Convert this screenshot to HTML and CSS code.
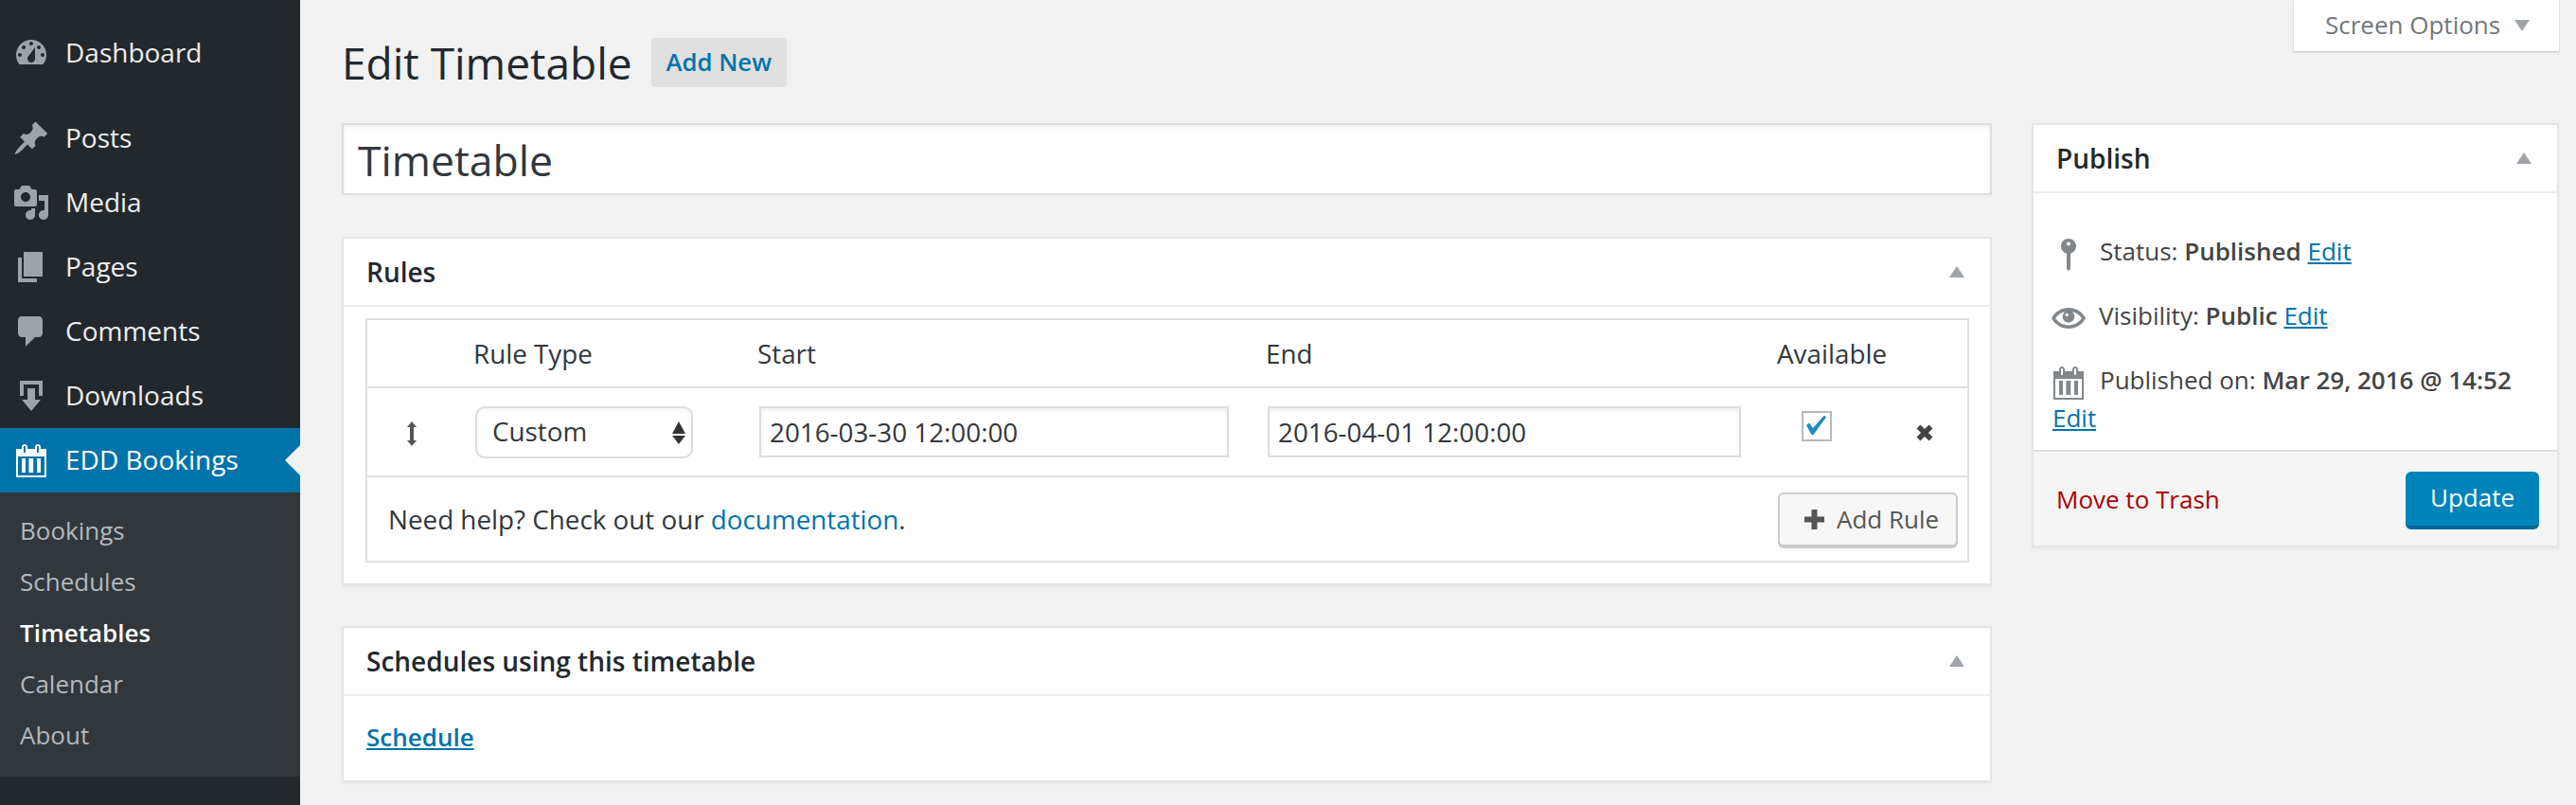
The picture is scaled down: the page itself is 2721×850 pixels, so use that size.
FILE: index.html
```html
<!DOCTYPE html>
<html lang="en">
<head>
  <meta charset="UTF-8">
  <title>Edit Timetable</title>
  <link rel="stylesheet" href="styles.css">
</head>
<body>
  <aside class="sidebar">
    <ul class="menu">
      <li class="menu-item first">
        <svg class="menu-icon" viewBox="0 0 20 20"><path fill-rule="evenodd" d="M3.76 16h12.48c1.1-1.37 1.76-3.11 1.76-5 0-4.42-3.58-8-8-8s-8 3.58-8 8c0 1.89.66 3.63 1.76 5zM10 4c.55 0 1 .45 1 1s-.45 1-1 1-1-.45-1-1 .45-1 1-1zM6 6c.55 0 1 .45 1 1s-.45 1-1 1-1-.45-1-1 .45-1 1-1zm8 0c.55 0 1 .45 1 1s-.45 1-1 1-1-.45-1-1 .45-1 1-1zm-5.37 5.55L12 7v6c0 1.1-.9 2-2 2s-2-.9-2-2c0-.57.24-1.08.63-1.45zM4 10c.55 0 1 .45 1 1s-.45 1-1 1-1-.45-1-1 .45-1 1-1zm12 0c.55 0 1 .45 1 1s-.45 1-1 1-1-.45-1-1 .45-1 1-1z"/><circle cx="10" cy="13" r="1" fill="#23282d"/></svg>
        Dashboard
      </li>
      <li class="menu-item">
        <svg class="menu-icon" viewBox="0 0 20 20"><path d="M10.44 3.02l1.82-1.82 6.36 6.35-1.83 1.82c-1.05-.68-2.48-.57-3.41.36l-.75.75c-.92.93-1.04 2.35-.35 3.41l-1.83 1.82-2.41-2.41-2.8 2.79c-.42.42-3.38 2.71-3.8 2.29s1.86-3.39 2.28-3.81l2.79-2.79L4.1 9.36l1.83-1.82c1.05.69 2.48.57 3.4-.36l.75-.75c.93-.92 1.05-2.35.36-3.41z"/></svg>
        Posts
      </li>
      <li class="menu-item">
        <svg class="menu-icon" viewBox="0 0 20 20"><path fill-rule="evenodd" d="M13 11V4c0-.55-.45-1-1-1h-1.67L9 1H5L3.67 3H2c-.55 0-1 .45-1 1v7c0 .55.45 1 1 1h10c.55 0 1-.45 1-1zM7 4.500c1.380 0 2.500 1.120 2.500 2.500S8.380 9.500 7 9.500 4.500 8.380 4.500 7 5.620 4.500 7 4.500zM14 6h5v10.500c0 1.380-1.120 2.500-2.500 2.500S14 17.880 14 16.500s1.120-2.500 2.500-2.500c.17 0 .34.02.5.05V9h-3V6zm-4 8.050V13h2v3.500c0 1.380-1.120 2.500-2.500 2.500S7 17.880 7 16.500 8.120 14 9.500 14c.17 0 .34.02.5.05z"/></svg>
        Media
      </li>
      <li class="menu-item">
        <svg class="menu-icon" viewBox="0 0 20 20"><path d="M6 15V2h10v13H6zm-1 1h8v2H3V5h2v11z"/></svg>
        Pages
      </li>
      <li class="menu-item">
        <svg class="menu-icon" viewBox="0 0 20 20"><path d="M5 2h9c1.100 0 2 .9 2 2v7c0 1.100-.9 2-2 2h-2l-5 5v-5H5c-1.100 0-2-.9-2-2V4c0-1.100.9-2 2-2z"/></svg>
        Comments
      </li>
      <li class="menu-item">
        <svg class="menu-icon" viewBox="0 0 20 20"><path d="M14.010 4v6h2V2H4v8h2.010V4h8zm-2 2v6h3l-5 6-5-6h3V6h4z"/></svg>
        Downloads
      </li>
      <li class="menu-item active">
        <svg class="menu-icon" viewBox="0 0 20 20"><path fill-rule="evenodd" d="M15 4h3v15H2V4h3V3c0-.8.7-1.500 1.500-1.500S8 2.200 8 3v1h4V3c0-.8.7-1.500 1.500-1.500S15 2.200 15 3v1zM6 3v2.500c0 .3.2.5.5.5s.5-.2.5-.5V3c0-.3-.2-.5-.5-.5S6 2.700 6 3zm7 0v2.500c0 .3.2.5.5.5s.5-.2.5-.5V3c0-.3-.2-.5-.5-.5s-.5.2-.5.5zM3 8v10h14V8H3zm2 1h2v7.500H5V9zm3.700 0h2.400v7.500H8.700V9zM13 9h2v7.500h-2V9z"/></svg>
        EDD Bookings
        <span class="menu-arrow"></span>
      </li>
    </ul>
    <ul class="submenu">
      <li>Bookings</li>
      <li>Schedules</li>
      <li class="current">Timetables</li>
      <li>Calendar</li>
      <li>About</li>
    </ul>
  </aside>

  <main class="content">
    <div class="top-bar">
      <div class="heading">
        <h1>Edit Timetable</h1>
        <a class="add-new">Add New</a>
      </div>
      <div class="screen-options">
        Screen Options
        <svg class="toggle" viewBox="0 0 16 12"><path d="M0 0h16L8 12z"/></svg>
      </div>
    </div>

    <div class="columns">
      <div class="col-main">
        <input class="title-input" type="text" value="Timetable">

        <section class="box">
          <h2>
            Rules
            <svg class="toggle" viewBox="0 0 16 12"><path d="M8 0l8 12H0z"/></svg>
          </h2>
          <div class="rules-wrap">
            <table class="rules">
              <colgroup>
                <col class="c-handle"><col class="c-type"><col class="c-start"><col class="c-end"><col class="c-avail"><col class="c-del">
              </colgroup>
              <thead>
                <tr>
                  <th></th>
                  <th>Rule Type</th>
                  <th>Start</th>
                  <th>End</th>
                  <th class="th-avail">Available</th>
                  <th></th>
                </tr>
              </thead>
              <tbody>
                <tr class="rule-row">
                  <td class="handle">
                    <svg width="12" height="26" viewBox="0 0 12 26"><path d="M6 0l5 6H8v14h3l-5 6-5-6h3V6H1z"/></svg>
                  </td>
                  <td>
                    <span class="select-wrap">
                      <select class="rule-type"><option>Custom</option></select>
                      <svg class="select-arrows" width="14" height="24" viewBox="0 0 14 24"><path d="M7 0l7 13H0zM0 15h14l-7 9z"/></svg>
                    </span>
                  </td>
                  <td><input class="date-input start" type="text" value="2016-03-30 12:00:00"></td>
                  <td><input class="date-input end" type="text" value="2016-04-01 12:00:00"></td>
                  <td>
                    <span class="check">
                      <svg width="28" height="28" viewBox="0 0 28 28"><path d="M3 13l3-2.500 4 5.500L22 2.500l2 2L10.500 23H8.500z"/></svg>
                    </span>
                  </td>
                  <td class="remove">
                    <svg width="18" height="18" viewBox="0 0 18 18"><path d="M2.500 2.500l13 13m0-13l-13 13"/></svg>
                  </td>
                </tr>
                <tr class="foot-row">
                  <td colspan="6">
                    <div class="foot">
                      <span>Need help? Check out our <a class="doc-link">documentation</a>.</span>
                      <button class="add-rule">
                        <svg width="21" height="21" viewBox="0 0 21 21"><path d="M7.500 0h6v7.500H21v6h-7.500V21h-6v-7.500H0v-6h7.500z"/></svg>
                        Add Rule
                      </button>
                    </div>
                  </td>
                </tr>
              </tbody>
            </table>
          </div>
        </section>

        <section class="box">
          <h2>
            Schedules using this timetable
            <svg class="toggle" viewBox="0 0 16 12"><path d="M8 0l8 12H0z"/></svg>
          </h2>
          <div class="schedule-list">
            <a class="schedule-link">Schedule</a>
          </div>
        </section>
      </div>

      <div class="col-side">
        <section class="box publish">
          <h2>
            Publish
            <svg class="toggle" viewBox="0 0 16 12"><path d="M8 0l8 12H0z"/></svg>
          </h2>
          <div class="pub-rows">
            <div class="pub-row">
              <svg class="pub-icon" viewBox="0 0 20 20"><path fill-rule="evenodd" d="M14 6c0-2.210-1.790-4-4-4S6 3.790 6 6c0 1.860 1.280 3.410 3 3.860V18l1 1 1-1V9.860c1.720-.45 3-2 3-3.860zM10 3.800c.6 0 1 .4 1 1s-.4 1-1 1-1-.4-1-1 .4-1 1-1z"/></svg>Status: <b>Published</b> <a class="edit-link">Edit</a>
            </div>
            <div class="pub-row">
              <svg class="pub-icon eye" viewBox="0 0 20 20"><path d="M19.700 9.400C17.700 6 14 3.900 10 3.900S2.300 6 .3 9.400L0 10l.3.6c2 3.400 5.700 5.500 9.700 5.500s7.700-2.100 9.700-5.500l.3-.6-.3-.6zM10 14.100c-3.100 0-6-1.600-7.700-4.100C3.600 8 5.700 6.600 8 6.100c-.9.600-1.500 1.700-1.500 2.900 0 1.900 1.600 3.500 3.500 3.500s3.500-1.600 3.500-3.500c0-1.200-.6-2.300-1.500-2.900 2.300.5 4.400 1.900 5.700 3.900-1.700 2.500-4.600 4.100-7.700 4.100z"/><circle cx="9" cy="8" r=".9" fill="#fff"/></svg>Visibility: <b>Public</b> <a class="edit-link">Edit</a>
            </div>
            <div class="pub-row">
              <svg class="pub-icon" viewBox="0 0 20 20"><path fill-rule="evenodd" d="M15 4h3v15H2V4h3V3c0-.8.7-1.500 1.500-1.500S8 2.200 8 3v1h4V3c0-.8.7-1.500 1.500-1.500S15 2.200 15 3v1zM6 3v2.500c0 .3.2.5.5.5s.5-.2.5-.5V3c0-.3-.2-.5-.5-.5S6 2.700 6 3zm7 0v2.500c0 .3.2.5.5.5s.5-.2.5-.5V3c0-.3-.2-.5-.5-.5s-.5.2-.5.5zM3 8v10h14V8H3zm2 1h2v7.500H5V9zm3.700 0h2.400v7.500H8.700V9zM13 9h2v7.500h-2V9z"/></svg>Published on: <b>Mar 29, 2016 @ 14:52</b> <a class="edit-link">Edit</a>
            </div>
          </div>
          <div class="pub-actions">
            <a class="trash">Move to Trash</a>
            <button class="update">Update</button>
          </div>
        </section>
      </div>
    </div>
  </main>
</body>
</html>
```

FILE: styles.css
```css
* {
  box-sizing: border-box;
}
html, body {
  margin: 0;
  height: 100%;
}
body {
  display: flex;
  min-height: 850px;
  overflow: hidden;
  background: #f1f1f1;
  color: #32373c;
  font-family: "Open Sans", sans-serif;
  font-size: 26px;
  line-height: 40px;
}
ul {
  margin: 0;
  padding: 0;
  list-style: none;
}

/* sidebar */
.sidebar {
  flex: 0 0 317px;
  background: #23282d;
}
.menu {
  padding-top: 21px;
}
.menu-item {
  position: relative;
  display: flex;
  align-items: center;
  height: 68px;
  padding: 0 0 2px 13px;
  color: #eee;
  font-size: 28px;
}
.menu-item.first {
  margin-bottom: 23px;
  padding-bottom: 0;
}
.menu-item.active {
  background: #0073aa;
  color: #fff;
}
.menu-icon {
  flex: none;
  width: 40px;
  height: 40px;
  margin: 2px 16px 0 0;
  fill: #9ea3a8;
}
.active .menu-icon {
  fill: #fff;
}
.menu-arrow {
  position: absolute;
  top: 18px;
  right: 0;
  border: 16px solid transparent;
  border-left-width: 0;
  border-right-color: #f1f1f1;
}
.submenu {
  padding: 13px 0 17px;
  background: #32373c;
  color: #b4b9be;
}
.submenu li {
  height: 54px;
  padding-left: 21px;
  line-height: 54px;
}
.submenu .current {
  color: #fff;
  font-weight: 600;
}

/* main area */
.content {
  flex: 1;
  min-width: 0;
  padding: 0 18px 0 44px;
}
.top-bar {
  display: flex;
  justify-content: space-between;
  align-items: flex-start;
  height: 130px;
}
.heading {
  display: flex;
  align-items: center;
  height: 52px;
  margin-top: 40px;
}
h1 {
  margin: 0 20px 0 0;
  color: #23282d;
  font-size: 46px;
  font-weight: 400;
  line-height: 52px;
}
.add-new {
  height: 52px;
  padding: 0 16px;
  border-radius: 4px;
  background: #e0e0e0;
  color: #0073aa;
  font-size: 25.700px;
  font-weight: 600;
  line-height: 52px;
}
.screen-options {
  display: flex;
  align-items: center;
  width: 280px;
  height: 54px;
  padding: 0 0 2px 33px;
  background: #fff;
  box-shadow: 0 1px 2px rgba(0, 0, 0, .2);
  color: #72777c;
}
.screen-options .toggle {
  margin: 2px 0 0 15px;
}
.toggle {
  width: 16px;
  height: 12px;
  fill: #a0a5aa;
}
.columns {
  display: grid;
  grid-template-columns: minmax(0, 1fr) 557px;
  gap: 42px;
  align-items: start;
}
.title-input {
  display: block;
  width: 100%;
  height: 76px;
  margin-bottom: 44px;
  padding: 0 15px;
  border: 2px solid #ddd;
  background: #fff;
  box-shadow: inset 0 2px 4px rgba(0, 0, 0, .07);
  color: #32373c;
  font-family: inherit;
  font-size: 44.500px;
  outline: none;
}

/* boxes */
.box {
  margin-bottom: 43px;
  border: 2px solid #e5e5e5;
  background: #fff;
  box-shadow: 0 2px 2px rgba(0, 0, 0, .04);
}
h2 {
  display: flex;
  justify-content: space-between;
  align-items: center;
  height: 72px;
  margin: 0;
  padding: 0 27px 0 24px;
  border-bottom: 2px solid #eee;
  color: #23282d;
  font-size: 28px;
  font-weight: 600;
}
.rules-wrap {
  padding: 12px 24px 22px;
}
.rules {
  width: 1692px;
  margin-left: -1px;
  border-collapse: collapse;
  table-layout: fixed;
  font-size: 27.800px;
}
.c-handle { width: 103px; }
.c-type { width: 300px; }
.c-start { width: 537px; }
.c-end { width: 538px; }
.c-avail { width: 140px; }
.c-del { width: 74px; }
.rules thead tr {
  height: 72px;
  border: 2px solid #e1e1e1;
}
.rules th {
  padding: 0 12px 0 10px;
  font-weight: 400;
  text-align: left;
}
.rules .th-avail {
  padding-left: 12px;
}
.rule-row {
  height: 94px;
  border: 2px solid #e1e1e1;
}
.foot-row {
  height: 90px;
  border: 2px solid #e1e1e1;
}
.rules td {
  padding: 0 12px;
}
.rules .handle {
  padding: 4px 0 0 41px;
  fill: #555;
}
.handle svg,
.remove svg,
.check svg {
  display: block;
}
.select-wrap {
  position: relative;
  display: block;
  width: 230px;
  height: 55px;
}
.rule-type {
  display: block;
  width: 100%;
  height: 100%;
  padding: 0 0 2px 16px;
  border: 2px solid #ddd;
  border-radius: 10px;
  background: #fff;
  box-shadow: inset 0 2px 4px rgba(0, 0, 0, .05);
  color: #32373c;
  font-family: inherit;
  font-size: 27.800px;
  appearance: none;
  outline: none;
}
.select-arrows {
  position: absolute;
  top: 16px;
  right: 8px;
  fill: #333;
}
.date-input {
  display: block;
  height: 54px;
  padding: 0 9px;
  border: 2px solid #ddd;
  background: #fff;
  box-shadow: inset 0 2px 4px rgba(0, 0, 0, .07);
  color: #32373c;
  font-family: inherit;
  font-size: 27.800px;
  outline: none;
}
.date-input.start { width: 496px; }
.date-input.end { width: 500px; }
.check {
  display: flex;
  justify-content: center;
  align-items: center;
  width: 32px;
  height: 32px;
  margin: -12px 0 0 26px;
  border: 2px solid #b4b9be;
  background: #fff;
  fill: #1e8cbe;
}
.rules .remove {
  padding: 2px 0 0 19px;
  fill: none;
  stroke: #444;
  stroke-width: 5.500;
}
.rules .foot-row td {
  padding: 0 10px 0 22px;
}
.foot {
  display: flex;
  justify-content: space-between;
  align-items: center;
}
.doc-link,
.edit-link,
.schedule-link {
  color: #0073aa;
}
.add-rule {
  display: flex;
  align-items: center;
  gap: 13px;
  width: 190px;
  height: 57px;
  padding: 0 0 0 26px;
  border: 2px solid #ccc;
  border-radius: 6px;
  background: #f7f7f7;
  box-shadow: 0 2px 0 #ccc;
  color: #555;
  fill: #555;
  font-family: inherit;
  font-size: 26px;
}
.schedule-list {
  height: 89px;
  padding: 23px 24px 0;
}
.schedule-link {
  font-weight: 600;
  text-decoration: underline;
}

/* publish box */
.pub-rows {
  padding-top: 27px;
  color: #444;
}
.pub-row {
  padding: 14px 10px 14px 20px;
}
.pub-row b {
  font-weight: 600;
}
.pub-icon {
  width: 40px;
  height: 40px;
  margin: -10px 13px -10px -3px;
  vertical-align: middle;
  fill: #82878c;
}
.pub-icon.eye {
  width: 36px;
  margin-left: -1px;
  margin-right: 14px;
}
.edit-link {
  text-decoration: underline;
}
.pub-actions {
  display: flex;
  justify-content: space-between;
  align-items: center;
  height: 101px;
  padding: 0 19px 0 24px;
  border-top: 2px solid #ddd;
  background: #f5f5f5;
}
.trash {
  color: #a00;
}
.update {
  width: 141px;
  height: 61px;
  margin-top: 4px;
  padding: 0 0 4px;
  border: 0;
  border-bottom: 4px solid #006799;
  border-radius: 6px;
  background: #0085ba;
  color: #fff;
  font-family: inherit;
  font-size: 26px;
}
```
